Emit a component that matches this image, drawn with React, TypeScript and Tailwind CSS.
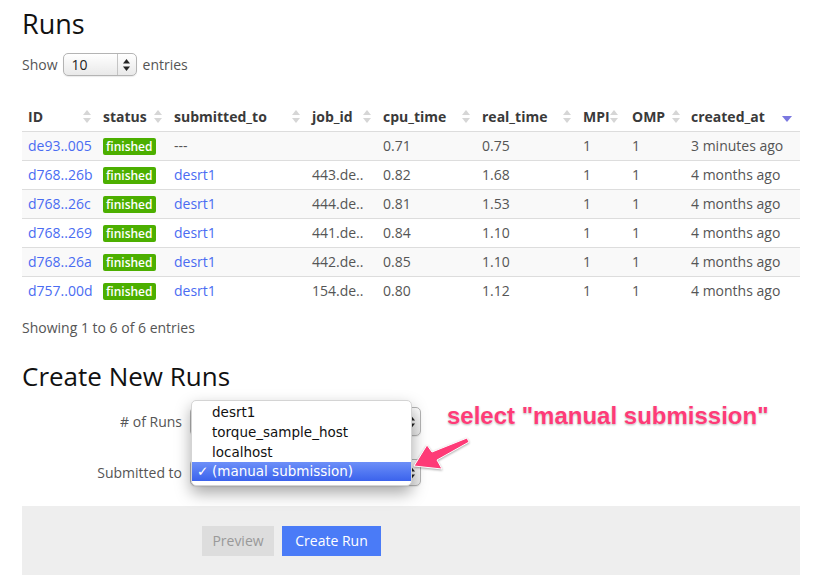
import React from 'react';

const runs = [
  { id: 'de93..005', to: '---', job: '', cpu: '0.71', real: '0.75', created: '3 minutes ago' },
  { id: 'd768..26b', to: 'desrt1', job: '443.de..', cpu: '0.82', real: '1.68', created: '4 months ago' },
  { id: 'd768..26c', to: 'desrt1', job: '444.de..', cpu: '0.81', real: '1.53', created: '4 months ago' },
  { id: 'd768..269', to: 'desrt1', job: '441.de..', cpu: '0.84', real: '1.10', created: '4 months ago' },
  { id: 'd768..26a', to: 'desrt1', job: '442.de..', cpu: '0.85', real: '1.10', created: '4 months ago' },
  { id: 'd757..00d', to: 'desrt1', job: '154.de..', cpu: '0.80', real: '1.12', created: '4 months ago' },
];

const columns = [
  { label: 'ID', w: 'w-[75px]', pr: 'pr-[6px]' },
  { label: 'status', w: 'w-[71px]', pr: 'pr-[6px]' },
  { label: 'submitted_to', w: 'w-[138px]', pr: 'pr-[6px]' },
  { label: 'job_id', w: 'w-[71px]', pr: 'pr-[6px]' },
  { label: 'cpu_time', w: 'w-[99px]', pr: 'pr-[6px]' },
  { label: 'real_time', w: 'w-[101px]', pr: 'pr-[6px]' },
  { label: 'MPI', w: 'w-[49px]', pr: 'pr-[17px]' },
  { label: 'OMP', w: 'w-[59px]', pr: 'pr-[5px]' },
  { label: 'created_at', w: 'w-[115px]', pr: 'pr-[8px]', sorted: true },
];

const SortBoth = () => (
  <svg width="8" height="13" viewBox="0 0 8 13" className="shrink-0">
    <path d="M4 0 L8 5 L0 5 Z" fill="#d6d6d6" />
    <path d="M0 8 L8 8 L4 13 Z" fill="#d6d6d6" />
  </svg>
);

const SortDesc = () => (
  <svg width="10" height="13" viewBox="0 0 10 13" className="shrink-0">
    <path d="M0 6 L10 6 L5 12 Z" fill="#7a78e0" />
  </svg>
);

const MacArrows = ({ color = '#222' }: { color?: string }) => (
  <svg width="7" height="12" viewBox="0 0 7 12">
    <path d="M3.5 0 L7 4.5 L0 4.5 Z" fill={color} />
    <path d="M0 7.5 L7 7.5 L3.5 12 Z" fill={color} />
  </svg>
);

const MacSelect = ({ value, className }: { value: string; className: string }) => (
  <div
    className={`flex items-stretch rounded-[5px] border border-[#b4b4b4] bg-gradient-to-b from-[#ffffff] to-[#e9e9e9] shadow-[0_1px_1px_rgba(0,0,0,0.08)] ${className}`}
  >
    <div className="flex-1 flex items-center pl-[8px] text-[14px] text-[#222]">{value}</div>
    <div className="w-[19px] border-l border-[#c4c4c4] flex items-center justify-center">
      <MacArrows />
    </div>
  </div>
);

const App: React.FC = () => {
  return (
    <div className="relative w-[837px] h-[585px] bg-white overflow-hidden font-['Open_Sans',sans-serif] text-[14px] text-[#555]">
      <div className="pl-[22px] w-[800px]">
        <h1 className="pt-[8px] text-[27px] leading-[31px] text-[#111]">Runs</h1>

        <div className="mt-[14px] flex items-center h-[23px]">
          <span>Show</span>
          <MacSelect value="10" className="ml-[5px] mr-[6px] w-[74px] h-[23px]" />
          <span>entries</span>
        </div>

        <table className="mt-[27px] w-[778px] table-fixed border-collapse">
          <thead>
            <tr className="h-[28px] border-b border-[#dddddd]">
              {columns.map((c) => (
                <th key={c.label} className={`${c.w} pl-[6px] ${c.pr} text-left font-bold text-[#3a3a3a]`}>
                  <div className="flex items-center justify-between">
                    <span>{c.label}</span>
                    {c.sorted ? <SortDesc /> : <SortBoth />}
                  </div>
                </th>
              ))}
            </tr>
          </thead>
          <tbody>
            {runs.map((r, i) => (
              <tr key={r.id} className={`h-[29px] border-b border-[#dddddd] last:border-b-0 ${i % 2 === 0 ? 'bg-[#f9f9f9]' : 'bg-white'}`}>
                <td className="px-[6px] text-[#4a6cf2]">{r.id}</td>
                <td className="px-[6px]">
                  <span className="inline-block rounded-[2px] bg-[#4caf00] px-[3px] leading-[17px] text-[12px] font-semibold text-white">
                    finished
                  </span>
                </td>
                <td className={`px-[6px] ${r.to === '---' ? 'text-[#555]' : 'text-[#4a6cf2]'}`}>{r.to}</td>
                <td className="px-[6px]">{r.job}</td>
                <td className="px-[6px]">{r.cpu}</td>
                <td className="px-[6px]">{r.real}</td>
                <td className="px-[6px]">1</td>
                <td className="px-[6px]">1</td>
                <td className="px-[6px]">{r.created}</td>
              </tr>
            ))}
          </tbody>
        </table>

        <p className="mt-[13px] leading-[20px]">Showing 1 to 6 of 6 entries</p>

        <h2 className="mt-[23px] text-[26px] leading-[30px] text-[#111]">Create New Runs</h2>

        <div className="mt-[16px] flex items-center h-[29px]">
          <label className="w-[160px] text-right">&#35; of Runs</label>
          <MacSelect value="" className="ml-[8px] w-[231px] h-[29px]" />
        </div>

        <div className="mt-[23px] flex items-center h-[27px]">
          <label className="w-[160px] text-right">Submitted to</label>
          <MacSelect
            value=""
            className="ml-[8px] w-[231px] h-[27px] shadow-[0_0_0_3px_rgba(110,160,240,0.55)]"
          />
        </div>

        <div className="mt-[20px] h-[69px] bg-[#eeeeee] flex items-center pl-[180px] gap-[8px]">
          <button className="w-[72px] h-[30px] bg-[#dddddd] text-[#999]">Preview</button>
          <button className="w-[99px] h-[30px] bg-[#4a7bf7] text-white">Create Run</button>
        </div>
      </div>

      {/* open native select menu */}
      <div className="absolute left-[191px] top-[400px] w-[221px] h-[86px] rounded-[5px] bg-white border border-[#d4d4d4] shadow-[0_7px_16px_rgba(0,0,0,0.35)] pt-[1px] font-['DejaVu_Sans',sans-serif] text-[13.5px] text-[#111]">
        <div className="h-[20px] leading-[20px] pl-[20px]">desrt1</div>
        <div className="h-[20px] leading-[20px] pl-[20px]">torque_sample_host</div>
        <div className="h-[20px] leading-[20px] pl-[20px]">localhost</div>
        <div className="h-[19px] leading-[19px] flex items-center bg-gradient-to-b from-[#6d8ff8] to-[#3b62ec] text-white">
          <span className="w-[20px] pl-[5px]">✓</span>
          <span>(manual submission)</span>
        </div>
      </div>

      {/* annotation */}
      <div className="absolute left-[447px] top-[402px] font-['Liberation_Sans',sans-serif] font-bold text-[24px] leading-[28px] text-[#fe3b77] [text-shadow:0_0_2px_#fff,0_1px_2px_rgba(0,0,0,0.35)]">
        select "manual submission"
      </div>
      <svg
        className="absolute left-[405px] top-[433px] drop-shadow-[0_1px_1px_rgba(0,0,0,0.35)]"
        width="70"
        height="42"
        viewBox="0 0 70 42"
      >
        <polygon
          points="9,33 22,12 27,19 62,5 64,9 32,27 37,36"
          fill="#fe3b77"
          stroke="#fff"
          strokeWidth="1"
          strokeLinejoin="round"
        />
      </svg>
    </div>
  );
};

export default App;
